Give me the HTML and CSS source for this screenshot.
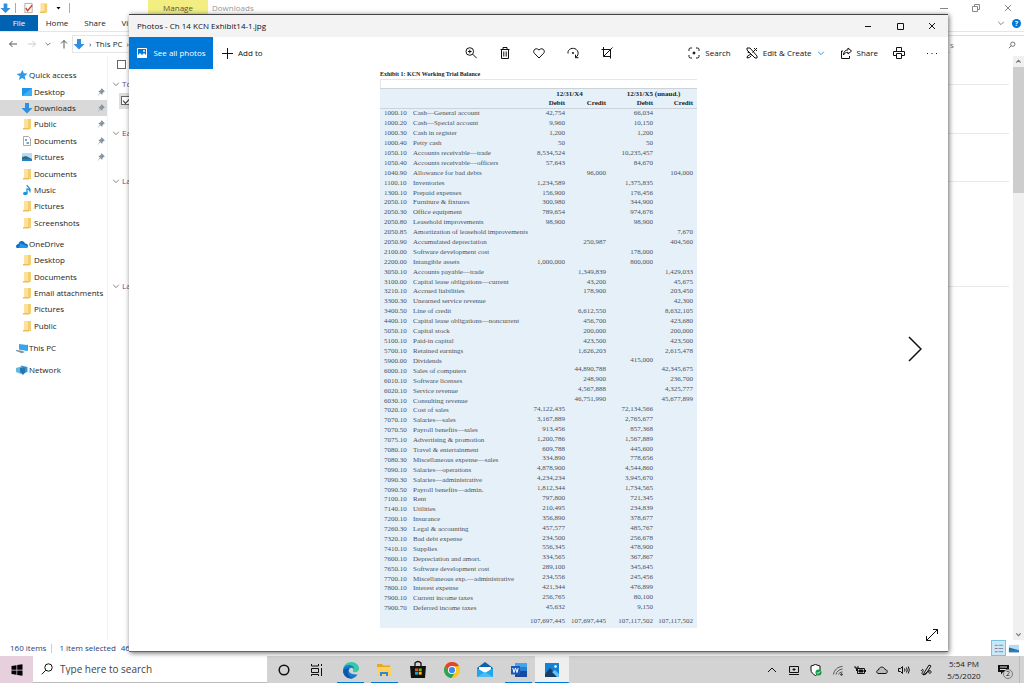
FILE: index.html
```html
<!DOCTYPE html>
<html lang="en">
<head>
<meta charset="utf-8">
<title>Photos - Ch 14 KCN Exhibit14-1.jpg</title>
<link rel="stylesheet" href="styles.css">
</head>
<body>
<svg class="defs" aria-hidden="true">
  <symbol id="folder" viewBox="0 0 12 12"><path d="M3 1h7v10H3z" fill="#f3cf73"/><path d="M3 1h4v9l-4 1z" fill="#ffe09a"/><path d="M2 10h6v1.5H2z" fill="#e9bd57"/></symbol>
  <symbol id="down" viewBox="0 0 12 12"><path d="M4 1h4v5h3.500L6 11.500.5 6H4z" fill="#2f8fe0"/></symbol>
  <symbol id="pin" viewBox="0 0 10 10"><path d="M5.500 1 9 4.500l-1 .2L6.500 6.200 6.300 8 4.500 6.300 1 9.500l3-3.800L2.200 4l1.700-.3L5.300 2z" fill="#8795a3"/></symbol>
  <symbol id="chev" viewBox="0 0 10 10"><path d="M1.500 3.500 5 7l3.500-3.500" fill="none" stroke="currentColor"/></symbol>
</svg>
<main class="desktop">
  <section class="explorer">
    <header class="titlebar">
      <div class="quick">
        <svg class="ic"><use href="#down"/></svg><i class="bar"></i>
        <svg class="ic" viewBox="0 0 12 12"><path d="M2 1h8v10H2z" fill="#fff" stroke="#aaa"/><path d="m3 6 2 3 5-6" fill="none" stroke="#d0492e" stroke-width="1.500"/></svg>
        <svg class="ic"><use href="#folder"/></svg>
        <svg class="caret" viewBox="0 0 6 6"><path d="M1 2h4L3 4.500z"/></svg><i class="bar"></i>
      </div>
      <span class="manage">Manage</span><span class="place">Downloads</span>
      <div class="wincontrols faded">
        <button aria-label="Minimize"><svg viewBox="0 0 10 10"><path d="M1 5.500h8"/></svg></button>
        <button aria-label="Restore"><svg viewBox="0 0 10 10"><path d="M1.500 3.500h5v5h-5zM3.500 3V1.500h5v5H7"/></svg></button>
        <button aria-label="Close"><svg viewBox="0 0 10 10"><path d="m2 2 6 6M8 2 2 8"/></svg></button>
      </div>
    </header>
    <nav class="tabs">
      <button class="file">File</button><button>Home</button><button>Share</button><button>Vi</button>
      <span class="help"><svg class="small"><use href="#chev"/></svg><b>?</b></span>
    </nav>
    <div class="address">
      <div class="arrows">
        <svg viewBox="0 0 10 10"><path d="M9 5H1.500M4.500 2l-3 3 3 3" stroke="#555"/></svg>
        <svg viewBox="0 0 10 10"><path d="M1 5h7.500M5.500 2l3 3-3 3" stroke="#ccc"/></svg>
        <svg class="tiny" viewBox="0 0 10 10"><path d="m2 3.500 3 3 3-3" stroke="#555"/></svg>
        <svg viewBox="0 0 10 10"><path d="M5 9.500V1.500M2 4.500l3-3 3 3" stroke="#555"/></svg>
      </div>
      <div class="path"><svg class="ic"><use href="#down"/></svg><span>›</span><span>This PC</span><span>›</span></div>
      <div class="find"><span>s</span><svg class="small" viewBox="0 0 10 10"><circle cx="6" cy="4" r="2.700" fill="none" stroke="#555"/><path d="M4 6 1 9" stroke="#555"/></svg></div>
    </div>
    <div class="body">
      <aside class="side">
        <ul class="ten">
          <li class="root"><svg class="ic" viewBox="0 0 12 12"><path d="m6.500 1 1.300 3.300 3.700.3-2.800 2.600.8 3.800-3.300-2L3 11l.8-3.800L.5 5l4-.7z" fill="#2f9be8"/></svg>Quick access</li>
          <li><svg class="ic" viewBox="0 0 12 12"><path d="M1 2h10v8H1z" fill="#1c95ea"/><path d="M1 10 11 2v8z" fill="#3eb0f7"/></svg>Desktop<svg class="pin"><use href="#pin"/></svg></li>
          <li class="sel"><svg class="ic"><use href="#down"/></svg>Downloads<svg class="pin"><use href="#pin"/></svg></li>
          <li><svg class="ic"><use href="#folder"/></svg>Public<svg class="pin"><use href="#pin"/></svg></li>
          <li><svg class="ic" viewBox="0 0 12 12"><path d="M2.500 1.500h5l2 2v7h-7z" fill="#fff" stroke="#aaa"/><path d="M4 5h2M5.500 8h2.500" stroke="#4e87b8" stroke-width="1.500"/></svg>Documents<svg class="pin"><use href="#pin"/></svg></li>
          <li><svg class="ic" viewBox="0 0 12 12"><path d="M1 2h10v8H1z" fill="#b5dcf4"/><path d="m1 6 4-1 6 3v2H1z" fill="#2e6a8c"/><path d="M1 8h10v2H1z" fill="#2580cc"/></svg>Pictures<svg class="pin"><use href="#pin"/></svg></li>
          <li><svg class="ic"><use href="#folder"/></svg>Documents</li>
          <li><svg class="ic" viewBox="0 0 12 12"><path d="M6 1c0 2 4 2.500 3 6-.5-1.500-1.500-2-3-2.200V9.500" fill="none" stroke="#1996e3" stroke-width="1.300"/><ellipse cx="4.300" cy="9.500" rx="2.300" ry="1.800" fill="#1996e3"/></svg>Music</li>
          <li><svg class="ic"><use href="#folder"/></svg>Pictures</li>
          <li><svg class="ic"><use href="#folder"/></svg>Screenshots</li>
        </ul>
        <ul class="six">
          <li class="root"><svg class="ic" viewBox="0 0 12 12"><path d="M0 9c0-2 1-3 2.500-3C3 3.500 5 2.500 7 3.200 8.500 4 9 5 9 5.500c2 0 3 1 3 2.300S11 10 10 10H1.500Q.3 10 0 9z" fill="#0d6fc7"/><path d="m4 5 8 3.500c-.3 1-1 1.500-2 1.500H3z" fill="#2397e8"/></svg>OneDrive</li>
          <li><svg class="ic"><use href="#folder"/></svg>Desktop</li>
          <li><svg class="ic"><use href="#folder"/></svg>Documents</li>
          <li><svg class="ic"><use href="#folder"/></svg>Email attachments</li>
          <li><svg class="ic"><use href="#folder"/></svg>Pictures</li>
          <li><svg class="ic"><use href="#folder"/></svg>Public</li>
        </ul>
        <ul class="one"><li class="root"><svg class="ic" viewBox="0 0 12 12"><path d="m3 2 8 1v6L3 7.500z" fill="#35a6ea"/><path d="m11 3 .8-.4v6L11 9z" fill="#476"/><path d="m0 8 5 .5 4 1.500-3 1.300L0 9z" fill="#7f96a8"/></svg>This PC</li></ul>
        <ul class="one"><li class="root"><svg class="ic" viewBox="0 0 12 12"><path d="m5 1.500 6.500 1.500v5L6 10z" fill="#3797d3"/><path d="m0 4 5-1.500v7.500L0 8z" fill="#69b6de"/><path d="m4 4 5-.5v5L7 11 4 8z" fill="#2577b4"/></svg>Network</li></ul>
      </aside>
      <div class="files">
        <input class="check" type="checkbox" aria-label="Select all items">
        <div class="group g1"><svg class="small"><use href="#chev"/></svg>To</div>
        <div class="picked"><input class="check" type="checkbox" checked aria-label="Select file"></div>
        <div class="group g2"><svg class="small"><use href="#chev"/></svg>Ea</div>
        <div class="group g3"><svg class="small"><use href="#chev"/></svg>La</div>
        <div class="group g4"><svg class="small"><use href="#chev"/></svg>La</div>
      </div>
      <div class="scroll">
        <svg viewBox="0 0 10 10"><path d="M3 6 5 4l2 2" fill="none" stroke="#777"/></svg><i></i>
        <svg viewBox="0 0 10 10"><path d="m3 4 2 2 2-2" fill="none" stroke="#777"/></svg>
      </div>
    </div>
    <footer class="status">
      <span>160 items</span><i></i><span>1 item selected</span><span>46</span>
      <div class="views">
        <button class="on" aria-label="Details"><svg viewBox="0 0 12 12"><path d="M2 2.500h3M2 6h3M2 9.500h3" stroke="#967"/><path d="M6 2.500h5M6 6h5M6 9.500h5" stroke="#789"/></svg></button>
        <button aria-label="Large icons"><svg viewBox="0 0 12 12"><path d="M1 2h11v8H1z" fill="#b5dcf4"/><path d="m1 5 11 3v2H1z" fill="#2e6a8c"/><path d="M1 8h11v2H1z" fill="#2580cc"/></svg></button>
      </div>
    </footer>
  </section>

  <section class="photos">
    <header class="caption"><span>Photos - Ch 14 KCN Exhibit14-1.jpg</span>
      <div class="wincontrols">
        <button aria-label="Minimize"><svg viewBox="0 0 10 10"><path d="M2 5.500h6"/></svg></button>
        <button aria-label="Maximize"><svg viewBox="0 0 10 10"><path d="M2.500 2.500h6v6h-6z"/></svg></button>
        <button aria-label="Close"><svg viewBox="0 0 10 10"><path d="m2 2 6 6M8 2 2 8"/></svg></button>
      </div>
    </header>
    <div class="toolbar">
      <div class="left">
        <button class="all"><svg class="ic" viewBox="0 0 12 12"><path class="frame" d="M1.500 1.500h9v9h-9z"/><path d="m1 9 3-3 2 2 2-2 3 3v2H1z" fill="#fff"/><circle cx="8" cy="4" r="1" fill="#fff"/></svg>See all photos</button>
        <button class="add"><svg class="ic" viewBox="0 0 12 12"><path d="M6.500 1v11M1 6.500h11"/></svg>Add to</button>
      </div>
      <div class="mid">
        <button aria-label="Zoom"><svg viewBox="0 0 12 12"><circle cx="4.800" cy="4.500" r="3.800"/><path d="m7.700 7.200 4 4M3 4.500h3.600M4.800 2.700v3.600"/></svg></button>
        <button aria-label="Delete"><svg viewBox="0 0 12 12"><path d="M1.500 2.500h9M4 2.500v-2h4v2M2.500 2.500v9h7v-9M4.800 4.500v5M7.200 4.500v5"/></svg></button>
        <button aria-label="Favorite"><svg viewBox="0 0 12 12"><path d="M6 11 1.300 6.200C-.8 3.500 2.800-.2 6 3c3.200-3.200 6.800.5 4.700 3.200z"/></svg></button>
        <button aria-label="Rotate"><svg viewBox="0 0 12 12"><path d="M1 6.500C0 1 9 -1 11 5c.5 2-.2 4-2.300 5.500M8.500 7.700v3h3"/><circle cx="6" cy="6" r=".7"/></svg></button>
        <button aria-label="Crop"><svg viewBox="0 0 12 12"><path d="M2.500 0v9.500h7.500M.5 2.500h9v9M2.500 9.500 11.500.5"/></svg></button>
      </div>
      <div class="right">
        <button><svg class="ic" viewBox="0 0 12 12"><path d="M1 4V2.500Q1 1 2.500 1H4M8 1h1.500Q11 1 11 2.500V4M11 8v1.500Q11 11 9.500 11H8M4 11H2.500Q1 11 1 9.500V8"/><circle cx="6" cy="6" r="1" fill="#111"/></svg>Search</button>
        <button><svg class="ic" viewBox="0 0 12 12"><path d="m1 1 3 0 7 8v2H9L1 3zM11 1 6.500 5.500M5 7l-3.500 2L1 11l2.500-.5 2-2M8 1l3 3M1.500 5l2 1"/></svg>Edit &amp; Create<svg class="small blue"><use href="#chev"/></svg></button>
        <button><svg class="ic" viewBox="0 0 12 12"><path d="M3 4H1.500v7.500h8V9M8 1l3.500 3L8 7V5.300C6 5.300 4.500 6 3.500 8 3.500 5 5 3 8 2.800z"/></svg>Share</button>
        <button aria-label="Print"><svg class="ic" viewBox="0 0 12 12"><path d="M3.500 4V.5h5V4M3 8.500H.5v-4h11v4H9M3.500 6.500h5v5h-5z"/></svg></button>
        <button aria-label="See more"><svg class="ic" viewBox="0 0 12 12"><path d="M1 6.500h1M5.500 6.500h1M10 6.500h1"/></svg></button>
      </div>
    </div>
    <div class="viewer">
      <article class="sheet">
        <h1>Exhibit 1: KCN Working Trial Balance</h1>
        <table>
          <colgroup><col class="c1"><col class="c2"><col class="c3"><col class="c4"><col class="c5"><col class="c6"></colgroup>
          <thead>
            <tr><th></th><th></th><th class="period" colspan="2">12/31/X4</th><th class="period" colspan="2">12/31/X5 (unaud.)</th></tr>
            <tr><th></th><th></th><th>Debit</th><th>Credit</th><th>Debit</th><th>Credit</th></tr>
          </thead>
          <tbody>
            <tr><td>1000.10</td><td>Cash—General account</td><td>42,754</td><td></td><td>66,034</td><td></td></tr>
            <tr><td>1000.20</td><td>Cash—Special account</td><td>9,960</td><td></td><td>10,150</td><td></td></tr>
            <tr><td>1000.30</td><td>Cash in register</td><td>1,200</td><td></td><td>1,200</td><td></td></tr>
            <tr><td>1000.40</td><td>Petty cash</td><td>50</td><td></td><td>50</td><td></td></tr>
            <tr><td>1050.10</td><td>Accounts receivable—trade</td><td>8,534,524</td><td></td><td>10,235,457</td><td></td></tr>
            <tr><td>1050.40</td><td>Accounts receivable—officers</td><td>57,643</td><td></td><td>84,670</td><td></td></tr>
            <tr><td>1040.90</td><td>Allowance for bad debts</td><td></td><td>96,000</td><td></td><td>104,000</td></tr>
            <tr><td>1100.10</td><td>Inventories</td><td>1,234,589</td><td></td><td>1,375,835</td><td></td></tr>
            <tr><td>1300.10</td><td>Prepaid expenses</td><td>156,900</td><td></td><td>176,456</td><td></td></tr>
            <tr><td>2050.10</td><td>Furniture &amp; fixtures</td><td>300,980</td><td></td><td>344,900</td><td></td></tr>
            <tr><td>2050.30</td><td>Office equipment</td><td>789,654</td><td></td><td>974,676</td><td></td></tr>
            <tr><td>2050.80</td><td>Leasehold improvements</td><td>98,900</td><td></td><td>98,900</td><td></td></tr>
            <tr><td>2050.85</td><td>Amortization of leasehold improvements</td><td></td><td></td><td></td><td>7,670</td></tr>
            <tr><td>2050.90</td><td>Accumulated depreciation</td><td></td><td>250,987</td><td></td><td>404,560</td></tr>
            <tr><td>2100.00</td><td>Software development cost</td><td></td><td></td><td>178,000</td><td></td></tr>
            <tr><td>2200.00</td><td>Intangible assets</td><td>1,000,000</td><td></td><td>800,000</td><td></td></tr>
            <tr><td>3050.10</td><td>Accounts payable—trade</td><td></td><td>1,349,839</td><td></td><td>1,429,033</td></tr>
            <tr><td>3100.00</td><td>Capital lease obligations—current</td><td></td><td>43,200</td><td></td><td>45,675</td></tr>
            <tr><td>3210.10</td><td>Accrued liabilities</td><td></td><td>178,900</td><td></td><td>203,450</td></tr>
            <tr><td>3300.30</td><td>Unearned service revenue</td><td></td><td></td><td></td><td>42,300</td></tr>
            <tr><td>3400.50</td><td>Line of credit</td><td></td><td>6,612,550</td><td></td><td>8,632,105</td></tr>
            <tr><td>4400.10</td><td>Capital lease obligations—noncurrent</td><td></td><td>456,700</td><td></td><td>423,680</td></tr>
            <tr><td>5050.10</td><td>Capital stock</td><td></td><td>200,000</td><td></td><td>200,000</td></tr>
            <tr><td>5100.10</td><td>Paid-in capital</td><td></td><td>423,500</td><td></td><td>423,500</td></tr>
            <tr><td>5700.10</td><td>Retained earnings</td><td></td><td>1,626,203</td><td></td><td>2,615,478</td></tr>
          </tbody>
          <tbody class="lower">
            <tr><td>5900.00</td><td>Dividends</td><td></td><td></td><td>415,000</td><td></td></tr>
            <tr><td>6000.10</td><td>Sales of computers</td><td></td><td>44,890,788</td><td></td><td>42,345,675</td></tr>
            <tr><td>6010.10</td><td>Software licenses</td><td></td><td>248,900</td><td></td><td>236,700</td></tr>
            <tr><td>6020.10</td><td>Service revenue</td><td></td><td>4,567,888</td><td></td><td>4,325,777</td></tr>
            <tr><td>6030.10</td><td>Consulting revenue</td><td></td><td>46,751,990</td><td></td><td>45,677,899</td></tr>
            <tr><td>7020.10</td><td>Cost of sales</td><td>74,122,435</td><td></td><td>72,134,566</td><td></td></tr>
            <tr><td>7070.10</td><td>Salaries—sales</td><td>3,167,889</td><td></td><td>2,765,677</td><td></td></tr>
            <tr><td>7070.50</td><td>Payroll benefits—sales</td><td>913,456</td><td></td><td>857,368</td><td></td></tr>
            <tr><td>7075.10</td><td>Advertising &amp; promotion</td><td>1,200,786</td><td></td><td>1,567,889</td><td></td></tr>
            <tr><td>7080.10</td><td>Travel &amp; entertainment</td><td>609,788</td><td></td><td>445,600</td><td></td></tr>
            <tr><td>7080.30</td><td>Miscellaneous expense—sales</td><td>334,890</td><td></td><td>778,656</td><td></td></tr>
            <tr><td>7090.10</td><td>Salaries—operations</td><td>4,878,900</td><td></td><td>4,544,860</td><td></td></tr>
            <tr><td>7090.30</td><td>Salaries—administrative</td><td>4,234,234</td><td></td><td>3,945,670</td><td></td></tr>
            <tr><td>7090.50</td><td>Payroll benefits—admin.</td><td>1,812,344</td><td></td><td>1,734,565</td><td></td></tr>
            <tr><td>7100.10</td><td>Rent</td><td>797,800</td><td></td><td>721,345</td><td></td></tr>
            <tr><td>7140.10</td><td>Utilities</td><td>210,495</td><td></td><td>234,839</td><td></td></tr>
            <tr><td>7200.10</td><td>Insurance</td><td>356,890</td><td></td><td>378,677</td><td></td></tr>
            <tr><td>7260.30</td><td>Legal &amp; accounting</td><td>457,577</td><td></td><td>485,767</td><td></td></tr>
            <tr><td>7320.10</td><td>Bad debt expense</td><td>234,500</td><td></td><td>256,678</td><td></td></tr>
            <tr><td>7410.10</td><td>Supplies</td><td>556,345</td><td></td><td>478,900</td><td></td></tr>
            <tr><td>7600.10</td><td>Depreciation and amort.</td><td>334,565</td><td></td><td>367,867</td><td></td></tr>
            <tr><td>7650.10</td><td>Software development cost</td><td>289,100</td><td></td><td>345,645</td><td></td></tr>
            <tr><td>7700.10</td><td>Miscellaneous exp.—administrative</td><td>234,556</td><td></td><td>245,456</td><td></td></tr>
            <tr><td>7800.10</td><td>Interest expense</td><td>421,344</td><td></td><td>476,899</td><td></td></tr>
            <tr><td>7900.10</td><td>Current income taxes</td><td>256,765</td><td></td><td>80,100</td><td></td></tr>
            <tr><td>7900.70</td><td>Deferred income taxes</td><td>45,632</td><td></td><td>9,150</td><td></td></tr>
          </tbody>
          <tfoot><tr><td></td><td></td><td>107,697,445</td><td>107,697,445</td><td>107,117,502</td><td>107,117,502</td></tr></tfoot>
        </table>
      </article>
      <button class="next" aria-label="Next"><svg viewBox="0 0 14 26"><path d="m1 1 12 12L1 25"/></svg></button>
      <button class="expand" aria-label="Full screen"><svg viewBox="0 0 14 14"><path d="m1.500 12.500 11-11M8 1.500h4.500V6M1.500 8v4.500H6"/></svg></button>
    </div>
  </section>
</main>
<footer class="taskbar">
  <button class="start" aria-label="Start"><svg viewBox="0 0 12 12"><path d="m.5 2 5-.8v4.500h-5zM6.200 1l5.300-.8v5.500H6.200zM.5 6.400h5v4.400l-5-.7zM6.200 6.400h5.300v5.400L6.200 11z"/></svg></button>
  <label class="search"><svg viewBox="0 0 12 12"><circle cx="7.500" cy="4.500" r="3.700"/><path d="M4.800 7.200.8 11.300"/></svg><input type="text" placeholder="Type here to search"></label>
  <nav class="apps">
    <button aria-label="Cortana"><svg viewBox="0 0 20 20"><circle cx="10" cy="10" r="4.800" fill="none" stroke="#111" stroke-width="1.500"/></svg></button>
    <button aria-label="Task view"><svg viewBox="0 0 20 20"><path d="M4.500 4v2h7V4M4.500 8.500h7v4h-7zM4.500 16v-1.500h7V16M14.500 4v2M14.500 8v8" fill="none" stroke="#111"/></svg></button>
    <button class="run" aria-label="Edge"><svg viewBox="0 0 20 20"><path d="M2 11C2 5 6 2 10.500 2c5 0 8 4 7.500 7-.4 3-3.500 3.700-6 3 1-2.500-.5-4.500-3-4.500C5.500 7.500 3 9 2 11z" fill="#36c9a5"/><path d="M2 11c0-4 3-6 6.500-6 3 .2 4.500 2 4.500 4-1-1.400-2.500-1.500-3.500-1C6 10 8 15 16.500 14.500 15 17 12.500 18.500 10 18.500c-4.500 0-8-3.500-8-7.500z" fill="#147bd1"/><path d="M8 9c-3 3 0 8.500 4 9.300-5 1-9.500-2.300-9.800-7C3 9 5.500 8 8 9z" fill="#1455a5"/></svg></button>
    <button class="run" aria-label="File Explorer"><svg viewBox="0 0 20 20"><path d="M3 4h5l1 1.500h7V16H3z" fill="#eaa61c"/><path d="M3 7h14v9H3z" fill="#ffd35b"/><path d="M6 16v-4h8v4h-2v-2H8v2z" fill="#298be0"/></svg></button>
    <button aria-label="Store"><svg viewBox="0 0 20 20"><path d="M7 6V3q3-3 6 0v3" fill="none" stroke="#111" stroke-width="1.300"/><path d="M2 6h16l-1 12H3z" fill="#111"/><path d="M7 8.500h3V11H7z" fill="#f25022"/><path d="M10.700 8.500h3V11h-3z" fill="#7fba00"/><path d="M7 11.700h3v3H7z" fill="#00a4ef"/><path d="M10.700 11.700h3v3h-3z" fill="#ffb900"/></svg></button>
    <button aria-label="Chrome"><svg viewBox="0 0 20 20"><circle cx="10" cy="10" r="8" fill="#f9c920"/><path d="M3.100 6A8 8 0 0 1 17 6.200h-7L6.500 12z" fill="#e24335"/><path d="M3.100 6A8 8 0 0 0 9.500 18l3.700-5.800-6.700-.2z" fill="#27a35a"/><circle cx="10" cy="10" r="4" fill="#fff"/><circle cx="10" cy="10" r="3.100" fill="#4285f4"/></svg></button>
    <button aria-label="Mail"><svg viewBox="0 0 20 20"><path d="m2 8 8-6 8 6v9H2z" fill="#0a63a8"/><path d="M4 7h12v7H4z" fill="#fff"/><path d="m2 8 8 5 8-5v9H2z" fill="#24a4ee"/><path d="m2 17 8-5 8 5z" fill="#46bdf6"/></svg></button>
    <button class="run" aria-label="Word"><svg viewBox="0 0 20 20"><path d="M6 3h12v4H6z" fill="#41a5ee"/><path d="M6 7h12v4H6z" fill="#2b7cd3"/><path d="M6 11h12v6H6z" fill="#164ba0"/><path d="M2 6h9v8.500H2z" fill="#185abd"/><path d="m3.800 8 1.200 4.500L6.500 8 8 12.500 9.200 8" fill="none" stroke="#fff"/></svg></button>
    <button class="run current" aria-label="Photos"><svg viewBox="0 0 20 20"><path d="M3 3h14v14H3z" fill="#1481d8"/><path d="m3 14 5-6 9 9H3z" fill="#173f68"/><path d="m10 12 3-2 4 4v3h-2z" fill="#5fc3f7"/><circle cx="13.500" cy="6.500" r="1.300" fill="#fff"/></svg></button>
  </nav>
  <div class="tray">
    <button aria-label="Hidden icons"><svg viewBox="0 0 12 12"><path d="m2 8 4-4 4 4"/></svg></button>
    <button aria-label="Display"><svg viewBox="0 0 12 12"><path d="M1.500 2.500h9v6h-9zM1 10.500h10M6 4v3M4.500 5.500h3"/></svg></button>
    <button aria-label="Security"><svg viewBox="0 0 12 12"><path d="M5.500.5 10 2v4c0 2.500-2 4-4.500 5.500C3 10 1 8.500 1 6V2z" fill="#fff"/><circle cx="8.500" cy="8.500" r="3" fill="#159848" stroke="none"/><path d="m7 8.500 1 1 2-2" stroke="#fff"/></svg></button>
    <button aria-label="Wi-Fi"><svg viewBox="0 0 12 12"><path d="M1.500 10.500C2 6 6 2.500 10.500 2.500M4 10.500C4.500 7.500 7 5.500 10.500 5M6.500 10.500c.5-1.500 2-2.500 4-2.500" stroke="#555"/><circle cx="9.500" cy="10.500" r=".8"/></svg></button>
    <button aria-label="Battery"><svg viewBox="0 0 12 12"><path d="M3.500 4.500h7v5h-7zM11.500 6v2M1 2v2h3V2M2.500 4v3"/><path d="M5 6h4v2H5z" fill="#111"/></svg></button>
    <button aria-label="OneDrive"><svg viewBox="0 0 12 12"><path d="M2 9.500C0 8.500.5 6 2.500 6 3 2.500 8 2 9 5.500c2.500 0 3 3 1 4z" fill="#bbb"/></svg></button>
    <button aria-label="Volume"><svg viewBox="0 0 12 12"><path d="M.5 4.500h2l2-2v7l-2-2h-2zM6.500 4.500q1 1.500 0 3M8.500 3.500q1.500 2.500 0 5M10.300 2.500q2 3.500 0 7"/></svg></button>
    <button aria-label="Pen"><svg viewBox="0 0 12 12"><path d="m4 9 5-8 2 1-5 8-2.500 1zM1 7c2-3 3-1 1.500 1S3 12 6 9s5-3 5-1-3 2-2-1"/></svg></button>
  </div>
  <time class="clock"><span>5:54 PM</span><span>5/5/2020</span></time>
  <button class="notes" aria-label="Notifications"><svg viewBox="0 0 14 12"><path d="M1 1h11v7H6l-2 2.500V8H1z" fill="#111"/><path d="M3 3h7M3 5.500h6" stroke="#ddd"/></svg><span>2</span></button>
</footer>
</body>
</html>
```
FILE: styles.css
```css
* { box-sizing: border-box; }
body { margin: 0; height: 100vh; display: flex; flex-direction: column; overflow: hidden; font: 8px/12px "Open Sans", "Noto Sans", sans-serif; color: #222; background: #fff; }
button { font: inherit; color: inherit; background: none; border: 0; padding: 0; display: flex; align-items: center; justify-content: center; white-space: nowrap; }
svg { display: block; flex: none; }
ul { list-style: none; margin: 0; padding: 0; }
.defs { position: absolute; width: 0; height: 0; }
.ic { width: 12px; height: 12px; }
.small { width: 8px; height: 8px; }
.desktop { flex: 1; min-height: 0; position: relative; display: flex; }

.explorer { flex: 1; min-width: 0; display: flex; flex-direction: column; }
.titlebar { height: 15px; display: flex; align-items: center; }
.quick { width: 148px; display: flex; align-items: center; }
.quick .ic { width: 11px; margin-right: 4px; }
.quick .bar + .ic { margin-left: 3px; }
.bar { width: 1px; height: 10px; background: #aaa; margin: 0 4px 0 0; }
.quick .caret { width: 7px; height: 6px; margin: 0 7px 0 2px; }
.manage { width: 60px; height: 15px; line-height: 16px; text-align: center; background: #f2ee82; color: #554; }
.place { flex: 1; padding-left: 4px; line-height: 16px; color: #999; }
.wincontrols { display: flex; align-self: stretch; }
.wincontrols button { width: 32px; }
.wincontrols svg { width: 10px; height: 10px; fill: none; stroke: #111; }
.faded svg { stroke: #888; }
.tabs { height: 17px; display: flex; border-bottom: 1px solid #e5e5e5; }
.tabs button { width: 38px; }
.tabs .file { background: #0063b1; color: #fff; }
.tabs button:last-of-type { width: 22px; }
.help { margin-left: auto; padding-right: 3px; display: flex; align-items: center; gap: 7px; color: #666; }
.help b { width: 9px; height: 9px; border-radius: 50%; background: #0078d7; color: #fff; font-size: 7px; line-height: 9px; text-align: center; }
.address { height: 24px; display: flex; align-items: center; }
.arrows { width: 72px; padding-left: 8px; display: flex; align-items: center; gap: 9px; }
.arrows svg { width: 10px; height: 10px; fill: none; }
.arrows .tiny { width: 8px; margin: 0 -2px; }
.path { flex: 1; height: 18px; display: flex; align-items: center; gap: 4px; border: 1px solid #e5e5e5; border-right: 0; }
.find { width: 74px; height: 18px; padding-right: 8px; display: flex; align-items: center; justify-content: space-between; border-top: 1px solid #ddd; color: #777; }
.body { flex: 1; min-height: 0; display: flex; }
.side { width: 108px; padding-top: 11px; display: flex; flex-direction: column; gap: 5px; border-right: 1px solid #f3f3f3; }
.side ul { display: grid; grid-auto-rows: 1fr; }
.ten { height: 164px; }
.six { height: 98px; }
.one { height: 17px; }
.side li { display: flex; align-items: center; gap: 1px; padding-left: 21px; white-space: nowrap; }
.side .root { padding-left: 16px; }
.side .sel { background: #d9d9d9; }
.pin { width: 10px; height: 10px; margin-left: auto; margin-right: 1px; }
.files { flex: 1; min-width: 0; padding: 4px 4px 0 5px; }
.check { appearance: none; display: block; width: 9px; height: 9px; margin: 0 0 0 4px; border: 1px solid #666; background: #fff; }
.check:checked::after { content: ""; display: block; width: 6px; height: 3px; margin: 1px 0 0 1px; border: solid #333; border-width: 0 0 1px 1px; transform: rotate(-45deg); }
.group { height: 16px; display: flex; align-items: center; gap: 2px; color: #64439a; }
.group::after { content: ""; flex: 1; height: 1px; background: #e8e8e8; }
.group svg { color: #666; margin-left: -1px; }
.g1 { margin-top: 7px; }
.picked { width: 40px; height: 16px; margin: 1px 0 0 6px; padding: 3px 0 0 2px; background: #ddd; }
.picked .check { margin: 0; }
.g2 { margin-top: 16px; }
.g3 { margin-top: 32px; }
.g4 { margin-top: 89px; }
.scroll { width: 11px; display: flex; flex-direction: column; background: #f0f0f0; }
.scroll svg { width: 11px; height: 11px; }
.scroll i { height: 126px; background: #cdcdcd; }
.scroll svg:last-child { margin-top: auto; }
.status { height: 16px; padding-left: 10px; display: flex; align-items: center; gap: 5px; color: #1d3f77; }
.status i { width: 1px; height: 9px; margin-right: 2px; background: #ccc; }
.views { margin-left: auto; padding-right: 3px; display: flex; height: 16px; }
.views button { width: 15px; }
.views svg { width: 11px; height: 11px; }
.views .on { background: #cce8f6; border: 1px solid #76c3e8; }

.photos { position: absolute; inset: 14px 76px 4px 129px; display: flex; flex-direction: column; background: #fff; border-top: 1px solid #444; border-bottom: 1px solid #666; box-shadow: 1px 1px 5px #0009; }
.caption { height: 22px; padding-left: 8px; display: flex; align-items: center; justify-content: space-between; background: #f3f3f3; color: #111; }
.toolbar { height: 32px; display: grid; grid-template-columns: 1fr auto 1fr; color: #111; }
.toolbar svg { fill: none; stroke: #111; }
.toolbar button { gap: 5px; }
.left, .mid, .right { display: flex; }
.all { width: 84px; background: #0078d7; color: #fff; }
.toolbar .all svg { stroke: none; }
.all .frame { stroke: #fff; }
.add { padding-left: 8px; }
.mid button { width: 34px; }
.mid svg { width: 12px; height: 12px; }
.right { justify-content: flex-end; gap: 15px; padding-right: 10px; }
.right button:last-child { margin-left: 6px; }
.toolbar .blue { color: #0078d7; stroke: #0078d7; }
.viewer { flex: 1; min-height: 0; display: flex; justify-content: center; align-items: flex-start; position: relative; }
.sheet { width: 317px; font-family: "Liberation Serif", serif; font-size: 7px; line-height: 9px; color: #4a5058; }
.sheet h1 { margin: 0; height: 19px; font-size: 6px; line-height: 10px; color: #222; }
.sheet h1::after { content: ""; display: block; height: 9px; border: solid #e6e6e6; border-width: 1px 0 0 1px; }
table { width: 100%; height: 540px; table-layout: fixed; border-collapse: separate; border-spacing: 0; background: #e6f0f8; border-top: 1px solid #ccd3d8; }
.c1 { width: 33px; } .c2 { width: 112px; } .c3 { width: 40px; } .c4 { width: 41px; } .c5 { width: 47px; } .c6 { width: 44px; }
td, th { padding: 0; text-align: right; white-space: nowrap; }
th { color: #222; }
thead tr { height: 10px; }
thead tr:last-child th { border-bottom: 1px solid #ccd3d8; }
tfoot tr { height: 14px; }
td:first-child { padding-left: 4px; }
td:nth-child(-n+2) { text-align: left; }
td:last-child, th:last-child { padding-right: 4px; }
th.period { text-align: center; padding-left: 8px; }
.lower td:nth-child(n+3) { vertical-align: top; line-height: 7px; }
.next, .expand { position: absolute; }
.next { right: 26px; top: 267px; }
.expand { right: 9px; bottom: 9px; }
.next svg { width: 14px; height: 26px; fill: none; stroke: #111; stroke-width: 1.500; }
.expand svg { width: 14px; height: 14px; fill: none; stroke: #111; }

.taskbar { height: 27px; display: flex; background: #d3d3d3; }
.start { width: 33px; background: #e6d0de; }
.start svg { width: 12px; height: 12px; }
.search { width: 234px; display: flex; align-items: center; gap: 7px; padding-left: 8px; background: #fff; border-bottom: 1px solid #bbb; }
.search svg { width: 12px; height: 12px; fill: none; stroke: #111; }
.search input { flex: 1; min-width: 0; border: 0; padding: 0; background: none; font: inherit; font-size: 10px; }
.search input::placeholder { color: #444; }
.apps { width: 302px; display: grid; grid-template-columns: repeat(9, 1fr); }
.apps svg { width: 20px; height: 20px; }
.apps .run { background: linear-gradient(#0078d7, #0078d7) center bottom / 27px 1px no-repeat; }
.apps .current { background: linear-gradient(#0078d7, #0078d7) center bottom / 100% 1px no-repeat #efefef; }
.tray { margin-left: auto; display: flex; }
.tray button { width: 22px; }
.tray svg { width: 12px; height: 12px; fill: none; stroke: #111; }
.clock { width: 54px; display: flex; flex-direction: column; justify-content: center; text-align: center; }
.notes { width: 29px; margin-right: 4px; border-right: 1px solid #bbb; }
.notes svg { width: 14px; height: 12px; }
.notes span { width: 10px; height: 10px; margin: 8px 0 0 -8px; border: 1px solid #777; border-radius: 50%; background: #d3d3d3; font-size: 7px; line-height: 8px; }
```
